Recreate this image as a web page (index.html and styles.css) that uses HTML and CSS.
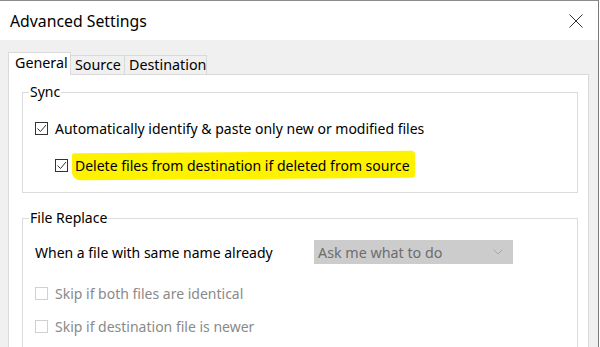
FILE: index.html
```html
<!DOCTYPE html>
<html lang="en">
<head>
  <meta charset="UTF-8">
  <title>Advanced Settings</title>
  <link rel="stylesheet" href="styles.css">
</head>
<body>
  <div class="window">
    <div class="titlebar">
      <span class="title">Advanced Settings</span>
      <svg class="close" width="14" height="14" viewBox="0 0 14 14">
        <path d="M0.5 0.5 L13.5 13.5 M13.5 0.5 L0.5 13.5" stroke="#333" stroke-width="1" fill="none" />
      </svg>
    </div>

    <div class="client">
      <div class="tabs">
        <div class="tab active">General</div>
        <div class="tab">Source</div>
        <div class="tab">Destination</div>
      </div>

      <div class="panel">
        <fieldset class="group sync">
          <legend>Sync</legend>
          <label class="row">
            <span class="check">
              <svg width="11" height="11" viewBox="0 0 11 11"><path d="M1.5 5.5 L4.5 8.5 L10 2" stroke="#333" fill="none" /></svg>
            </span>
            Automatically identify &amp; paste only new or modified files
          </label>
          <label class="row indent">
            <span class="check">
              <svg width="11" height="11" viewBox="0 0 11 11"><path d="M1.5 5.5 L4.5 8.5 L10 2" stroke="#333" fill="none" /></svg>
            </span>
            <span class="highlight">Delete files from destination if deleted from source</span>
          </label>
        </fieldset>

        <fieldset class="group replace">
          <legend>File Replace</legend>
          <div class="row when">
            <span class="when-label">When a file with same name already</span>
            <div class="select">
              <span>Ask me what to do</span>
              <svg width="10" height="6" viewBox="0 0 10 6">
                <path d="M0.5 0.5 L5 5 L9.5 0.5" stroke="#a8a8a8" fill="none" />
              </svg>
            </div>
          </div>
          <label class="row disabled first">
            <span class="check"></span>
            Skip if both files are identical
          </label>
          <label class="row disabled">
            <span class="check"></span>
            Skip if destination file is newer
          </label>
        </fieldset>
      </div>
    </div>
  </div>
</body>
</html>
```

FILE: styles.css
```css
* {
  box-sizing: border-box;
}

body {
  margin: 0;
  background: #ffffff;
  font-family: 'Noto Sans', 'Open Sans', sans-serif;
  color: #000;
  font-size: 14px;
}

.window {
  width: 599px;
  height: 347px;
  border-top: 1px solid #8c8c8c;
  border-right: 1px solid #7a7a7a;
  overflow: hidden;
  display: flex;
  flex-direction: column;
}

.titlebar {
  height: 39px;
  flex: none;
  background: #fff;
  display: flex;
  align-items: center;
  justify-content: space-between;
  padding: 0 15px 0 10px;
}

.title {
  font-size: 15.8px;
  color: #000;
}

.close {
  display: block;
}

.client {
  flex: 1;
  background: #f0f0f0;
  padding: 12px 9px 0 8px;
}

/* tabs */
.tabs {
  display: flex;
  align-items: flex-end;
  height: 22px;
  position: relative;
  z-index: 1;
}

.tab {
  height: 19px;
  line-height: 18px;
  padding: 0 4px;
  border: 1px solid #d9d9d9;
  border-bottom: none;
  border-left: none;
  background: #f0f0f0;
  font-size: 14.3px;
}

.tab.active {
  height: 23px;
  margin-bottom: -1px;
  line-height: 20px;
  background: #fff;
  border-left: 1px solid #d9d9d9;
  padding: 0 5px 0 6px;
  width: 63px;
}

.tab:nth-child(2) {
  width: 54px;
}

.tab:nth-child(3) {
  width: 82px;
}

.panel {
  background: #fff;
  border: 1px solid #d9d9d9;
  height: 300px;
  padding: 7px 10px 0 13px;
}

/* group boxes */
.group {
  margin: 0;
  border: 1px solid #dcdcdc;
  padding: 0 0 0 12px;
}

.group legend {
  margin-left: -6px;
  padding: 0 1px;
  line-height: 20px;
  font-size: 14px;
}

.sync {
  padding-top: 16px;
  padding-bottom: 17px;
}

.replace {
  margin-top: 15px;
  padding-top: 12px;
  padding-bottom: 40px;
}

.row {
  display: flex;
  align-items: center;
  height: 20px;
  gap: 7px;
  white-space: nowrap;
}

.row.indent {
  margin-top: 17px;
  padding-left: 20px;
}

.check {
  width: 13px;
  height: 13px;
  border: 1px solid #333;
  background: #fff;
  flex: none;
}

.check svg {
  display: block;
}

.highlight {
  position: relative;
  z-index: 0;
}

.highlight::before {
  content: "";
  position: absolute;
  z-index: -1;
  left: -3px;
  right: -5px;
  top: -4px;
  bottom: -4px;
  background: #fff200;
  border-radius: 2px 4px 3px 8px;
  transform: skewY(-0.4deg);
}

/* file replace */
.row.when {
  height: 24px;
  gap: 0;
}

.when-label {
  width: 279px;
}

.select {
  width: 199px;
  height: 24px;
  background: #cccccc;
  color: #6d6d6d;
  font-size: 14.3px;
  display: flex;
  align-items: center;
  justify-content: space-between;
  padding: 0 10px 0 4px;
}

.row.disabled {
  color: #8a8a8a;
  margin-top: 13px;
}

.row.disabled.first {
  margin-top: 19px;
}

.row.disabled .check {
  border-color: #d0d0d0;
}
```
